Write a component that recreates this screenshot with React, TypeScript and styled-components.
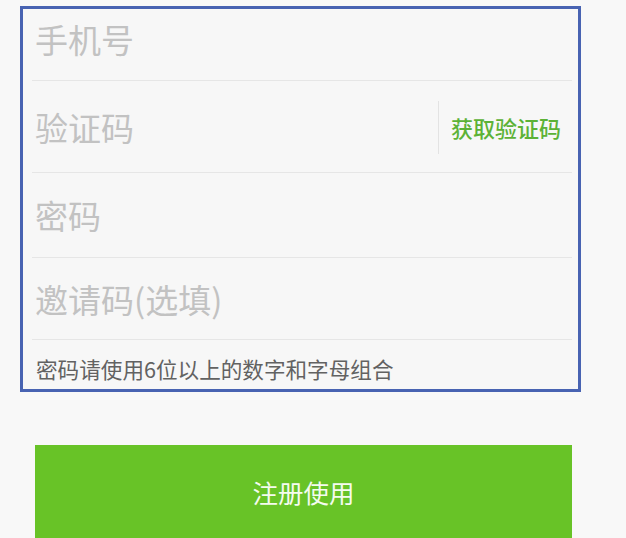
import React from "react";
import styled, { createGlobalStyle } from "styled-components";

const GlobalStyle = createGlobalStyle`
  html, body {
    margin: 0;
    padding: 0;
    background: #f8f8f8;
  }
  body {
    font-family: "Noto Sans CJK SC", "Noto Sans", sans-serif;
  }
  * { box-sizing: border-box; }
`;

const Page = styled.div`
  width: 626px;
  height: 538px;
  overflow: hidden;
  padding-top: 6px;
  display: flex;
  flex-direction: column;
`;

const FormBox = styled.div`
  margin-left: 20px;
  width: 561px;
  border: 3px solid #4863b2;
  background: #f7f7f7;
  padding: 0 6px 0 9px;
  display: flex;
  flex-direction: column;
`;

const Row = styled.div<{ $h: number; $pb?: number }>`
  height: ${(p) => p.$h}px;
  padding-bottom: ${(p) => p.$pb ?? 0}px;
  border-bottom: 1px solid #e6e6e6;
  display: flex;
  align-items: center;
`;

const Field = styled.input`
  flex: 1;
  min-width: 0;
  border: none;
  outline: none;
  background: transparent;
  padding: 0 0 0 3px;
  margin: 0;
  font-family: "Noto Sans CJK SC", "Noto Sans", sans-serif;
  font-size: 33px;
  line-height: 1;
  height: 42px;
  color: #333;
  &::placeholder {
    color: #c2c2c2;
  }
`;

const VDivider = styled.div`
  width: 1px;
  height: 53px;
  background: #e3e3e3;
  margin-top: 2px;
`;

const CodeButton = styled.button`
  border: none;
  background: transparent;
  padding: 0;
  margin: 0 11px 0 12px;
  font-family: "Noto Sans CJK SC", "Noto Sans", sans-serif;
  font-size: 22px;
  line-height: 1;
  font-weight: 500;
  color: #5cb236;
  cursor: pointer;
`;

const Hint = styled.div`
  height: 49px;
  padding: 19px 0 0 4px;
  font-size: 21.6px;
  line-height: 20px;
  color: #626262;
  white-space: nowrap;
`;

const SubmitButton = styled.button`
  margin: 53px 0 0 35px;
  width: 537px;
  height: 94px;
  flex-shrink: 0;
  border: none;
  background: #68c327;
  color: #f4fbef;
  font-family: "Noto Sans CJK SC", "Noto Sans", sans-serif;
  font-size: 25.5px;
  line-height: 1;
  padding: 0;
  cursor: pointer;
`;

export default function App() {
  return (
    <>
      <GlobalStyle />
      <Page>
        <FormBox>
          <Row $h={72} $pb={12}>
            <Field placeholder="手机号" />
          </Row>
          <Row $h={92}>
            <Field placeholder="验证码" />
            <VDivider />
            <CodeButton>获取验证码</CodeButton>
          </Row>
          <Row $h={85}>
            <Field placeholder="密码" type="password" />
          </Row>
          <Row $h={82}>
            <Field placeholder="邀请码(选填)" />
          </Row>
          <Hint>密码请使用6位以上的数字和字母组合</Hint>
        </FormBox>
        <SubmitButton>注册使用</SubmitButton>
      </Page>
    </>
  );
}
